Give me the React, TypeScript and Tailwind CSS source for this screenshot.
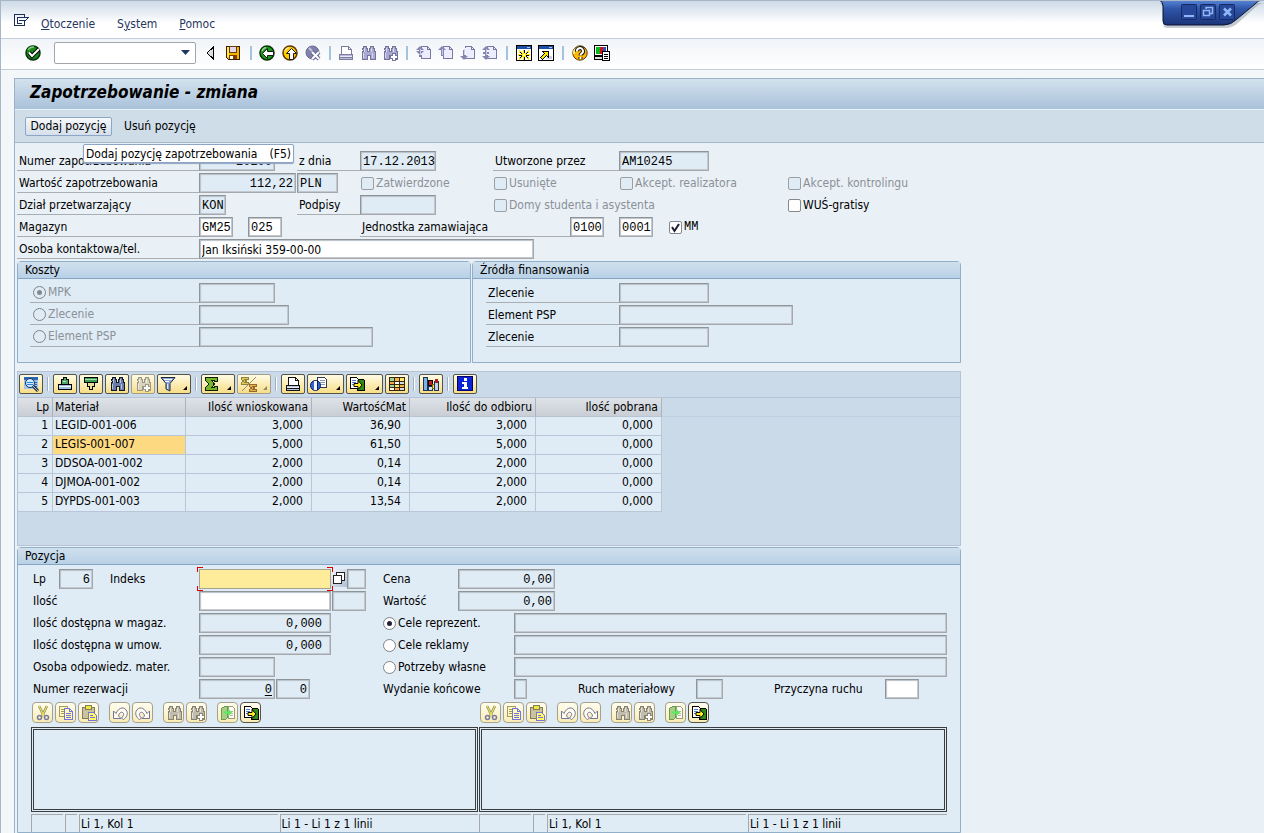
import type { ReactNode } from "react";
import clsx from "clsx";

const SANS = "font-['DejaVu_Sans_Condensed','DejaVu_Sans',sans-serif]";
const MONO = "font-['Liberation_Mono',monospace]";

/* ---------- icons ---------- */

function Svg({ children, w = 16, h = 16, crisp = true }: { children: ReactNode; w?: number; h?: number; crisp?: boolean }) {
  return (
    <svg width={w} height={h} viewBox={`0 0 ${w} ${h}`} fill="none" shapeRendering={crisp ? "crispEdges" : "auto"} className="shrink-0" aria-hidden="true">
      {children}
    </svg>
  );
}

const MenuIcon = () => (
  <Svg w={15} h={13}>
    <path d="M10.500 2.500V.5H.5v11h10V8.500" stroke="#1c2f5c" />
    <path d="M8 9.500H3.500v-6H14L10 8.500M5 6.500h6" stroke="#1c2f5c" />
  </Svg>
);

const OkIcon = () => (
  <Svg crisp={false}>
    <circle cx="8" cy="8" r="7" fill="#1d8a1d" stroke="#04300a" strokeWidth="1.500" />
    <path d="M3 5a6 6 0 0 1 6-3" stroke="#7ed67e" strokeWidth="1.500" />
    <path d="M4 7.500 7 11l7-7" stroke="#000" strokeWidth="4" />
    <path d="M4 7.500 7 11l7-7" stroke="#fff" strokeWidth="2" />
  </Svg>
);

const PrevIcon = () => (
  <Svg w={10}>
    <path d="M8.500 2v12L2 8z" fill="#dcdcdc" stroke="#000" />
  </Svg>
);

const SaveIcon = () => (
  <Svg>
    <path d="M1.500 1.500h13v13h-11l-2-2z" fill="#f5b800" stroke="#3a1d00" />
    <path d="M2 2h2v10H2z" fill="#ffe94a" />
    <path d="M4.500 1.500h7v6h-7z" fill="#e4d8ee" stroke="#6a3a10" />
    <path d="M4 10h8v4H4z" fill="#7a3a00" />
    <path d="M5 11h3v3H5z" fill="#fff" />
  </Svg>
);

function RoundIcon({ fill, edge, d, rotate = 0 }: { fill: string; edge: string; d: string; rotate?: number }) {
  return (
    <Svg crisp={false}>
      <circle cx="8" cy="8" r="7" fill={fill} stroke={edge} strokeWidth="1.500" />
      <path d="M3 6a5 5 0 0 1 4-3.500" stroke="#fff" strokeOpacity=".55" strokeWidth="1.500" />
      <g transform={`rotate(${rotate} 9 9)`}>
        <path d={d} fill="#fff" stroke="#1a1a1a" />
      </g>
    </Svg>
  );
}

const ARROW = "M3.500 8.500l5-5v3h6v4h-6v3z";
const BackIcon = () => <RoundIcon fill="#1d9a1d" edge="#062f06" d={ARROW} />;
const ExitIcon = () => <RoundIcon fill="#ffcc00" edge="#5e3500" d={ARROW} rotate={90} />;

const CancelIcon = () => (
  <Svg crisp={false}>
    <circle cx="7.500" cy="7.500" r="6.500" fill="#8080a8" stroke="#6a6a92" />
    <path d="M4 3l3 3" stroke="#c3c3dd" strokeWidth="2" />
    <path d="M7 7l7 7M14 7l-7 7" stroke="#6a6a96" strokeWidth="4" />
    <path d="M7 7l7 7M14 7l-7 7" stroke="#fff" strokeWidth="2" />
  </Svg>
);

function PrintIcon({ line = "#7c7c9c", fill = "#b9b9e0", paper = "#fff" }) {
  return (
    <Svg>
      <path d="M3.500 9.500v-8h7l3 3v5z" fill={paper} stroke={line} />
      <path d="M10.500 1.500v3h3" stroke={line} />
      <path d="M1.500 9.500h13v5h-13z" fill={fill} stroke={line} />
      <path d="M2 12.500h12" stroke={line} />
      <path d="M2 11h12" stroke="#fff" strokeOpacity=".7" />
    </Svg>
  );
}

function FindIcon({ fill = "#a9a9d3", line = "#73739b", plus = false }) {
  return (
    <Svg>
      <path d="M2.500 3.500h1v-2h3v2h1v3h2v-3h1v-2h3v2h1v3h1v8h-5v-4h-3v4h-5v-8h1z" fill={fill} stroke={line} />
      <path d="M4.500 3v4M11.500 3v4M3.500 8v5M12.500 8v5" stroke="#fff" strokeOpacity=".55" />
      {plus && <path d="M10.500 8.500h3v2h2v3h-2v2h-3v-2h-2v-3h2z" fill="#fff" stroke={line} />}
    </Svg>
  );
}

const PAGE_ARROWS = {
  first: "M4 0L0 4h3v1H0l4 4 4-4H5V4h3zM3 9h2v2H3z",
  prev: "M4 0L0 4h3v6h3V4h2z",
  next: "M4 14L0 10h3V4h2v6h3z",
  last: "M4 0L0 4h3v2H1v2h2v2H0l4 4 4-4H5V8h2V6H5V4h3z",
};

function PageIcon({ kind }: { kind: "first" | "prev" | "next" | "last" }) {
  return (
    <Svg>
      <path d="M5.500 2.500v-1h6l3 3v8.500h-9v-3" fill="#eeecff" stroke="#7a7aa0" />
      <path d="M11.500 1.500v3h3" stroke="#7a7aa0" />
      <path d={PAGE_ARROWS[kind]} fill="#8686b0" transform="translate(0 1)" shapeRendering="auto" />
      <path d="M4 4v6" stroke="#c9c9ea" />
    </Svg>
  );
}

const SessionIcon = () => (
  <Svg>
    <path d="M.5.5h15v15H.5z" fill="#fff" stroke="#000" />
    <path d="M1 1h14v3H1z" fill="#1b4fa6" />
    <path d="M11 2h3v1h-3z" fill="#9ec6ff" />
    <path d="M3 6l10 8M13 6L3 14M8 5v10M2 10h12" stroke="#ffe600" strokeWidth="2" />
    <path d="M4 7l2 2M12 7l-2 2M4 13l2-2M12 13l-2-2M8 5v3M8 12v3M3 10h3M10 10h3" stroke="#000" />
    <path d="M7 9h2v2H7z" fill="#fff" />
  </Svg>
);

const ShortcutIcon = () => (
  <Svg>
    <path d="M.5.5h15v15H.5z" fill="#fff" stroke="#000" />
    <path d="M1 1h14v3H1z" fill="#1b4fa6" />
    <path d="M11 2h3v1h-3z" fill="#9ec6ff" />
    <path d="M10 11h4v3h-6z" fill="#d0d0e4" />
    <path d="M4.500 6.500h6v6l-2-2-4 4-2-2 4-4z" fill="#ffe600" stroke="#000" />
  </Svg>
);

const HelpIcon = () => (
  <Svg crisp={false}>
    <circle cx="8" cy="8" r="7.200" fill="#ffb800" stroke="#5e3500" />
    <path d="M2 9a6 6 0 0 1 6-7" stroke="#fff27a" strokeWidth="2" />
    <path d="M5 6.500a3 3 0 1 1 4.500 2.200Q8.500 9.200 8.500 10.500M8.500 12v2" stroke="#111" strokeWidth="4" />
    <path d="M5 6.500a3 3 0 1 1 4.500 2.200Q8.500 9.200 8.500 10.500M8.500 12v2" stroke="#fff" strokeWidth="2" />
  </Svg>
);

const LayoutIcon = () => (
  <Svg>
    <path d="M.5.5h13v10H.5z" fill="#fff" stroke="#000" />
    <path d="M2 2h4v7H2z" fill="#00b91c" />
    <path d="M6 2h3v7H6z" fill="#e01010" />
    <path d="M9 2h3v7H9z" fill="#2b50c8" />
    <path d="M.5 11.500h8v3h-8z" fill="#ddd" stroke="#000" />
    <path d="M8.500 6.500h7v9h-7z" fill="#fff" stroke="#000" />
    <path d="M10 9.500h4M10 11.500h4M10 13.500h4" stroke="#000" />
  </Svg>
);

const DetailIcon = () => (
  <Svg w={18}>
    <path d="M2 1h14v12H2z" fill="#9ec4ef" />
    <path d="M2 1h14v3H2zM13 6h2v1h-2zM13 8h2v1h-2zM13 10h2v1h-2z" fill="#2a66b8" />
    <circle cx="8" cy="7" r="4.500" fill="#c5ecff" stroke="#1f2c46" shapeRendering="auto" />
    <path d="M5 6h6M5 8h6" stroke="#2f7fe0" />
    <path d="M11 10l5 5" stroke="#1f2c46" strokeWidth="3" shapeRendering="auto" />
    <path d="M11 10l5 5" stroke="#b7c8de" shapeRendering="auto" />
  </Svg>
);

const SortUpIcon = () => (
  <Svg>
    <path d="M6.500 1.500h3v2h2v5h-7v-5h2z" fill="#4fa566" stroke="#000" />
    <path d="M6 5.500h3" stroke="#b7e3c0" />
    <path d="M1.500 8.500h13v5h-13z" fill="#9dbfe4" stroke="#000" />
    <path d="M2 10h12" stroke="#fff" />
  </Svg>
);

const SortDownIcon = () => (
  <Svg>
    <path d="M1.500 1.500h13v5h-13z" fill="#3a9a50" stroke="#000" />
    <path d="M2 3h12" stroke="#a6dfb2" />
    <path d="M4.500 6.500h7v4h-2v3h-3v-3h-2z" fill="#e9df9a" stroke="#000" />
  </Svg>
);

const FilterIcon = () => (
  <Svg>
    <path d="M1 1.500h14l-5 6V15l-4-2V7.500z" fill="#8fa9d0" stroke="#1d2740" shapeRendering="auto" />
    <path d="M4 3.500h8M5 5.500h4" stroke="#fff" />
    <path d="M7.500 8v5" stroke="#dfe8f5" />
  </Svg>
);

const SumIcon = () => (
  <Svg>
    <path d="M1.500 1.500h12v4h-3v-1h-3l3 3.500-3 3.500h3v-1h3v4h-12v-3l3.500-3.500L1.500 4.500z" fill="#79b52a" stroke="#0a1f00" />
  </Svg>
);

const SubtotalIcon = () => (
  <Svg w={18}>
    <path d="M1.500 1.500h7v2h-4l2 1.500-2 1.500h4v2h-7v-2L3.500 5 1.500 3.500z" fill="#e3c94f" stroke="#8e8240" />
    <path d="M9.500 8.500h7v2h-4l2 1.500-2 1.500h4v2h-7v-2l2-1.500-2-1.500z" fill="#efab4a" stroke="#8e6c30" />
    <path d="M2 15L16 1" stroke="#9a8f66" shapeRendering="auto" />
  </Svg>
);

const ViewIcon = () => (
  <Svg w={18}>
    <path d="M7.500 1.500h7l2 2v8h-9z" fill="#fff" stroke="#2d3a58" />
    <path d="M10 4.500h5M10 6.500h5M10 8.500h5" stroke="#8a97b5" />
    <circle cx="5.500" cy="9.500" r="5" fill="#2f63d6" stroke="#101c5a" shapeRendering="auto" />
    <path d="M4 5h3v9H4z" fill="#f2f6ff" />
    <path d="M7.500 5v9" stroke="#101c5a" />
  </Svg>
);

function ExportIcon({ faded = false }) {
  return faded ? (
    <Svg>
      <path d="M8.500 1.500h4l2 2v10h-6z" fill="#fdfdf2" stroke="#9a9a80" />
      <path d="M10 6.500h3M10 8.500h3M10 10.500h3" stroke="#b5b5a0" />
      <path d="M1.500 3.500l3-2h3v11l-2 2h-4z" fill="#a5cf86" stroke="#6d9a50" />
      <path d="M4 6.500h4v-3l4 4-4 4v-3H4z" fill="#5eea5e" shapeRendering="auto" />
    </Svg>
  ) : (
    <Svg>
      <path d="M8.500 3.500h6l1 1v10h-7z" fill="#2e8b16" stroke="#000" />
      <path d="M1.500 1.500h6l2 2v9h-8z" fill="#fff" stroke="#000" />
      <path d="M3 4.500h4M3 6.500h4M3 8.500h2" stroke="#5b79c0" />
      <path d="M5 7.500h4v-3l4 4.500-4 4.500v-3H5z" fill="#ffee20" stroke="#000" shapeRendering="auto" />
    </Svg>
  );
}

const GridIcon = () => (
  <Svg>
    <path d="M0 1h16v14H0z" fill="#33260a" />
    <path d="M1 2h4v3H1zM1 9h4v2H1z" fill="#9fd49f" />
    <path d="M6 2h4v3H6zM11 9h4v2h-4z" fill="#f7b33f" />
    <path d="M11 2h4v3h-4zM6 9h4v2H6z" fill="#ffe86b" />
    <path d="M1 6h4v2H1zM6 12h4v2H6z" fill="#f8a24a" />
    <path d="M6 6h4v2H6zM1 12h4v2H1z" fill="#fff" />
    <path d="M11 6h4v2h-4zM11 12h4v2h-4z" fill="#cfd9ee" />
  </Svg>
);

const ChartIcon = () => (
  <Svg>
    <path d="M.5 1.500h4v13h-4z" fill="#7fb0e4" stroke="#1d3354" />
    <path d="M5.500 4.500h4v5h-4z" fill="#c22020" stroke="#000" />
    <path d="M5.500 10.500h4v4h-4z" fill="#d8e2f2" stroke="#1d3354" />
    <path d="M9.500 8.500h3v4h-3z" fill="#ffe55a" stroke="#8a6d00" />
    <path d="M11.500 5.500h4v9h-4z" fill="#bcd2ee" stroke="#1d3354" />
    <path d="M12 3h3v4h-3z" fill="#b01c1c" />
  </Svg>
);

const InfoIcon = () => (
  <Svg>
    <path d="M.5.5h15v14H.5z" fill="#0a22d8" stroke="#000066" />
    <path d="M7 2h3v3H7zM5 6h5v5h1v2H5v-2h2V8H5z" fill="#fff" />
  </Svg>
);

const CutIcon = () => (
  <Svg crisp={false}>
    <path d="M4 1l5 10M12 1L7 11" stroke="#8d8a5e" strokeWidth="2.500" />
    <path d="M4 1l5 10M12 1L7 11" stroke="#fff25a" />
    <circle cx="4.500" cy="12.500" r="2" stroke="#7a7a9e" strokeWidth="1.500" />
    <circle cx="11.500" cy="12.500" r="2" stroke="#7a7a9e" strokeWidth="1.500" />
  </Svg>
);

const CopyIcon = () => (
  <Svg>
    <path d="M1.500 1.500h8v10h-8z" fill="#fffbc0" stroke="#a39c62" />
    <path d="M3 4.500h5M3 6.500h5M3 8.500h5" stroke="#a39c62" />
    <path d="M6.500 3.500h5l3 3v8h-8z" fill="#fffcb0" stroke="#7474e0" />
    <path d="M11.500 3.500v3h3M8 8.500h5M8 10.500h5M8 12.500h5" stroke="#7474e0" />
  </Svg>
);

const PasteIcon = () => (
  <Svg>
    <path d="M1.500 2.500h12v11h-12z" fill="#c9c3a0" stroke="#857d58" />
    <path d="M4.500.5h6v4h-6z" fill="#ece83c" stroke="#857d58" />
    <path d="M7.500 7.500h5l3 3v5h-8z" fill="#fffb60" stroke="#7474e0" />
    <path d="M9 10.500h3M9 12.500h5" stroke="#7474e0" />
  </Svg>
);

function UndoIcon({ redo = false }) {
  return (
    <Svg crisp={false}>
      <g transform={redo ? "translate(16 0) scale(-1 1)" : undefined}>
        <path d="M1.500 6v7.500H9l-2.500-2.500C7 7.500 10 6 11.500 8.500c.5 1.500-.5 3-2 4.500l2 1.500c3-2 4.500-5 3.500-8C13 1.500 7 1.500 4 8.500z" fill="#fffdf0" stroke="#74749a" />
      </g>
    </Svg>
  );
}

const MatchIcon = () => (
  <Svg w={14} h={14}>
    <path d="M4.500 1.500h8v8h-8z" fill="#fff" stroke="#222" />
    <path d="M1.500 4.500h8v8h-8z" fill="#fff" stroke="#222" />
  </Svg>
);

/* ---------- form parts ---------- */

interface FieldProps {
  id: string;
  className: string;
  value?: string;
  label?: string;
  editable?: boolean;
  right?: boolean;
  inset?: boolean;
  sans?: boolean;
}

function Field({ id, className, value = "", label, editable, right, inset, sans }: FieldProps) {
  return (
    <input
      id={id}
      type="text"
      aria-label={label}
      defaultValue={value}
      readOnly={!editable}
      className={clsx(
        "h-5 shrink-0 border border-t-[#8f9499] border-l-[#8f9499] border-r-[#a5a9ad] border-b-[#a5a9ad] pt-0.5 text-[12px] leading-4 text-black shadow-[inset_1px_1px_1px_#b9c1c8,inset_-1px_-1px_0_#c3c9ce] outline-none",
        sans ? SANS : MONO,
        editable ? "bg-white" : "bg-[#dfebf5]",
        right && "text-right",
        inset ? "pr-2" : right ? "pr-0.5" : "pl-0.5",
        className
      )}
    />
  );
}

function Label({ htmlFor, children, line, className }: { htmlFor: string; children: ReactNode; line?: boolean; className?: string }) {
  return (
    <label htmlFor={htmlFor} className={clsx("h-5 shrink-0 leading-[21px] whitespace-nowrap", line && "border-b border-[#a9aeb3] pl-0.5", className)}>
      {children}
    </label>
  );
}

function Check({ id, label, disabled, checked, mono, className }: { id: string; label: string; disabled?: boolean; checked?: boolean; mono?: boolean; className?: string }) {
  return (
    <label htmlFor={id} className={clsx("flex h-5 items-center gap-0.5 pl-px leading-[21px] whitespace-nowrap", disabled ? "text-[#8b9197]" : "text-black", mono && MONO, className)}>
      <span className="relative">
        <input
          id={id}
          type="checkbox"
          disabled={disabled}
          defaultChecked={checked}
          className="peer block size-[13px] appearance-none rounded-xs border border-[#85898d] bg-white disabled:border-[#9a9fa4] disabled:bg-[#dfebf5]"
        />
        <svg width="13" height="13" viewBox="0 0 13 13" fill="none" className="pointer-events-none absolute inset-0 hidden peer-checked:block" aria-hidden="true">
          <path d="M3 6l2.500 4L10 3" stroke="#1c1c30" strokeWidth="2" />
        </svg>
      </span>
      {label}
    </label>
  );
}

function Radio({ id, name, label, disabled, checked, className }: { id: string; name: string; label: string; disabled?: boolean; checked?: boolean; className?: string }) {
  return (
    <label htmlFor={id} className={clsx("flex h-5 shrink-0 items-center gap-0.5 leading-[21px] whitespace-nowrap", disabled && "text-[#8b9197]", className)}>
      <span className="relative">
        <input
          id={id}
          type="radio"
          name={name}
          disabled={disabled}
          defaultChecked={checked}
          className="peer block size-[13px] appearance-none rounded-full border border-[#808488] bg-white disabled:bg-transparent"
        />
        <span className={clsx("pointer-events-none absolute inset-[4px] hidden rounded-full peer-checked:block", disabled ? "bg-[#85898d]" : "bg-[#22223a]")} />
      </span>
      {label}
    </label>
  );
}

function Panel({ title, children, className }: { title: string; children: ReactNode; className?: string }) {
  return (
    <section className={clsx("flex flex-col rounded-t-sm border border-[#92afca] bg-[#dfebf5]", className)}>
      <h2 className="h-[17px] border-b border-[#86a5c6] bg-linear-to-b from-[#cfe0ee] to-[#b9d1e6] pl-[7px] leading-4">{title}</h2>
      {children}
    </section>
  );
}

/* ---------- toolbars ---------- */

const Sep = () => <span className="h-3.5 w-0.5 shrink-0 bg-[#a4c3de]" />;

function IconButton({ label, children, className }: { label: string; children: ReactNode; className?: string }) {
  return (
    <button type="button" aria-label={label} className={clsx("flex h-4 shrink-0 items-center", className)}>
      {children}
    </button>
  );
}

function YellowButton({ label, children, menu, wide, faded }: { label: string; children: ReactNode; menu?: boolean; wide?: boolean; faded?: boolean }) {
  return (
    <button
      type="button"
      aria-label={label}
      className={clsx(
        "flex h-5 shrink-0 items-center rounded-xs border bg-linear-to-b from-[#fffbe4] to-[#f8dd84]",
        menu || wide ? "justify-between pl-0.5" : "w-6 justify-center",
        menu && "w-[34px]",
        wide && "w-[37px]",
        faded ? "border-[#a39f8c] text-[#8e8a70]" : "border-[#55534a] text-black"
      )}
    >
      {children}
      {(menu || wide) && (
        <svg width="7" height="16" viewBox="0 0 7 16" className="mr-0.5 shrink-0" aria-hidden="true">
          <path d="M6 10v4H2z" fill="currentColor" />
        </svg>
      )}
    </button>
  );
}

function EditButton({ label, children, active }: { label: string; children: ReactNode; active?: boolean }) {
  return (
    <button
      type="button"
      aria-label={label}
      className={clsx(
        "flex size-[21px] items-center justify-center rounded-sm border bg-linear-to-b from-[#fffdf0] to-[#f9ecb4]",
        active ? "border-[#55534a]" : "border-[#a7a18a]"
      )}
    >
      {children}
    </button>
  );
}

function StandardToolbar() {
  return (
    <div className="flex h-[31px] items-center border-b border-[#c3cdd9] bg-linear-to-b from-[#f1f4f8] to-white pb-0.5 pl-6">
      <IconButton label="Enter"><OkIcon /></IconButton>
      <div className="relative ml-[13px]">
        <input type="text" aria-label="Kod transakcji" className="block h-[22px] w-[142px] rounded-xs border border-[#a2a6aa] bg-white px-1 outline-none" />
        <button type="button" aria-label="Historia" className="absolute top-2 right-1.5">
          <svg width="9" height="6" viewBox="0 0 9 6" aria-hidden="true">
            <path d="M0 0h9L4.500 5z" fill="#20355f" />
          </svg>
        </button>
      </div>
      <IconButton label="Poprzedni" className="ml-[9px]"><PrevIcon /></IconButton>
      <IconButton label="Zapisz" className="mr-[9px] ml-2.5"><SaveIcon /></IconButton>
      <Sep />
      <div className="mr-2 ml-[7px] flex gap-[7px]">
        <IconButton label="Wstecz"><BackIcon /></IconButton>
        <IconButton label="Zakończ"><ExitIcon /></IconButton>
        <IconButton label="Anuluj"><CancelIcon /></IconButton>
      </div>
      <Sep />
      <div className="mr-2 ml-[7px] flex gap-1.5">
        <IconButton label="Drukuj"><PrintIcon /></IconButton>
        <IconButton label="Szukaj"><FindIcon /></IconButton>
        <IconButton label="Szukaj dalej"><FindIcon plus /></IconButton>
      </div>
      <Sep />
      <div className="mx-2 flex gap-1.5">
        <IconButton label="Pierwsza strona"><PageIcon kind="first" /></IconButton>
        <IconButton label="Poprzednia strona"><PageIcon kind="prev" /></IconButton>
        <IconButton label="Następna strona"><PageIcon kind="next" /></IconButton>
        <IconButton label="Ostatnia strona"><PageIcon kind="last" /></IconButton>
      </div>
      <Sep />
      <div className="mx-2 flex gap-1.5">
        <IconButton label="Nowy tryb"><SessionIcon /></IconButton>
        <IconButton label="Skrót"><ShortcutIcon /></IconButton>
      </div>
      <Sep />
      <div className="mx-2 flex gap-1.5">
        <IconButton label="Pomoc"><HelpIcon /></IconButton>
        <IconButton label="Układ"><LayoutIcon /></IconButton>
      </div>
    </div>
  );
}

function WindowControls() {
  return (
    <div className="absolute top-0 right-0">
      <svg width="106" height="30" viewBox="0 0 106 30" aria-hidden="true">
        <defs>
          <linearGradient id="tab" x1="0" y1="0" x2="0" y2="1">
            <stop offset="0" stopColor="#5a86d8" />
            <stop offset=".35" stopColor="#2f56a8" />
            <stop offset="1" stopColor="#1b3478" />
          </linearGradient>
        </defs>
        <path d="M1 2q4 1 4 6v15q0 4 5 4h57q8 0 14-6L99 5q3-3 7-3z" fill="#8b95a8" opacity=".5" />
        <path d="M1-1q4 1 4 6v15q0 4 4 4h57q7 0 13-6L97 3q3-4 8-4z" fill="url(#tab)" stroke="#0a1430" />
        <g fill="#27489a" stroke="#142a66">
          <rect x="23.500" y="3.500" width="15" height="15" rx="1" />
          <rect x="42.500" y="3.500" width="15" height="15" rx="1" />
          <rect x="61.500" y="3.500" width="15" height="15" rx="1" />
        </g>
        <g stroke="#8fb6f7" fill="none">
          <path d="M26 15h10" strokeWidth="2" />
          <path d="M48 8V6.500h6.500v6H52M45.500 9.500h6v5h-6z" strokeWidth="1.500" />
          <path d="M66 7.500l7 7M73 7.500l-7 7" strokeWidth="2.500" />
        </g>
      </svg>
    </div>
  );
}

/* ---------- sections ---------- */

function HeaderForm() {
  const row = "grid h-5 grid-cols-[182px_98px_63px_133px_126px_168px_1fr]";
  return (
    <form className="flex flex-col gap-0.5">
      <div className={row}>
        <Label htmlFor="numer" line>Numer zapotrzebowania</Label>
        <Field id="numer" className="w-[76px]" value="20200" right />
        <Label htmlFor="zdnia" line>z dnia</Label>
        <Field id="zdnia" className="w-[76px]" value="17.12.2013" />
        <Label htmlFor="utworzone" line>Utworzone przez</Label>
        <Field id="utworzone" className="w-[90px]" value="AM10245" />
      </div>
      <div className={row}>
        <Label htmlFor="wartosc" line>Wartość zapotrzebowania</Label>
        <Field id="wartosc" className="w-[97px]" value="112,22" right />
        <Field id="waluta" label="Waluta" className="w-[41px]" value="PLN" />
        <Check id="zatw" label="Zatwierdzone" disabled />
        <Check id="usun" label="Usunięte" disabled />
        <Check id="realiz" label="Akcept. realizatora" disabled />
        <Check id="kontr" label="Akcept. kontrolingu" disabled />
      </div>
      <div className={row}>
        <Label htmlFor="dzial" line>Dział przetwarzający</Label>
        <Field id="dzial" className="w-[27px]" value="KON" />
        <Label htmlFor="podpisy" line>Podpisy</Label>
        <Field id="podpisy" className="w-[76px]" />
        <Check id="domy" label="Domy studenta i asystenta" disabled className="col-span-2" />
        <Check id="wus" label="WUŚ-gratisy" />
      </div>
      <div className={row}>
        <Label htmlFor="magazyn" line>Magazyn</Label>
        <div className="col-span-2 flex gap-[15px]">
          <Field id="magazyn" className="w-[34px]" value="GM25" editable />
          <Field id="magazyn2" label="Magazyn" className="w-[34px]" value="025" editable />
        </div>
        <div className="col-span-2 flex">
          <Label htmlFor="jedn" line className="w-[210px]">Jednostka zamawiająca</Label>
          <Field id="jedn" className="w-[34px]" value="0100" editable />
        </div>
        <div className="flex gap-[15px]">
          <Field id="jedn2" label="Jednostka" className="w-[34px]" value="0001" editable />
          <Check id="mm" label="MM" checked mono />
        </div>
      </div>
      <div className={row}>
        <Label htmlFor="osoba" line>Osoba kontaktowa/tel.</Label>
        <Field id="osoba" className="col-span-4 w-[335px]" value="Jan Iksiński 359-00-00" editable sans />
      </div>
    </form>
  );
}

const KOSZTY = [
  { id: "mpk", label: "MPK", width: "w-[76px]", checked: true },
  { id: "zlec", label: "Zlecenie", width: "w-[90px]", checked: false },
  { id: "psp", label: "Element PSP", width: "w-[174px]", checked: false },
];

const ZRODLA = [
  { id: "f-zlec", label: "Zlecenie", width: "w-[90px]" },
  { id: "f-psp", label: "Element PSP", width: "w-[174px]" },
  { id: "f-zlec2", label: "Zlecenie", width: "w-[90px]" },
];

function CostPanels() {
  return (
    <div className="flex gap-px">
      <Panel title="Koszty" className="w-[454px]">
        <div className="flex flex-col gap-0.5 pt-1 pb-[15px] pl-3">
          {KOSZTY.map((k) => (
            <div key={k.id} className="flex">
              <Radio id={k.id} name="koszty" label={k.label} disabled checked={k.checked} className="w-[169px] border-b border-[#a9aeb3] pl-[3px]" />
              <Field id={k.id + "-v"} label={k.label} className={k.width} />
            </div>
          ))}
        </div>
      </Panel>
      <Panel title="Źródła finansowania" className="flex-1">
        <div className="flex flex-col gap-0.5 pt-1 pb-[15px] pl-[13px]">
          {ZRODLA.map((z) => (
            <div key={z.id} className="flex">
              <Label htmlFor={z.id} line className="w-[133px]">{z.label}</Label>
              <Field id={z.id} className={z.width} />
            </div>
          ))}
        </div>
      </Panel>
    </div>
  );
}

const ROWS = [
  ["LEGID-001-006", "3,000", "36,90", "3,000", "0,000"],
  ["LEGIS-001-007", "5,000", "61,50", "5,000", "0,000"],
  ["DDSOA-001-002", "2,000", "0,14", "2,000", "0,000"],
  ["DJMOA-001-002", "2,000", "0,14", "2,000", "0,000"],
  ["DYPDS-001-003", "2,000", "13,54", "2,000", "0,000"],
];

const COLS = [
  { name: "Lp", width: "w-[35px]" },
  { name: "Materiał", width: "w-[133px]" },
  { name: "Ilość wnioskowana", width: "w-[126px]" },
  { name: "WartośćMat", width: "w-[98px]" },
  { name: "Ilość do odbioru", width: "w-[126px]" },
  { name: "Ilość pobrana", width: "w-[126px]" },
];

const AlvSep = () => <span className="mx-0.5 h-3.5 w-0.5 shrink-0 border-r border-white bg-[#9fb0c2]" />;

function ItemsTable() {
  return (
    <section className="border border-[#b4c4d6] bg-[#cbdae8] pb-[33px]">
      <div className="flex h-[26px] items-center gap-0.5 border-b border-[#b4c4d6] pb-0.5 pl-px">
        <YellowButton label="Szczegóły"><DetailIcon /></YellowButton>
        <AlvSep />
        <YellowButton label="Sortuj rosnąco"><SortUpIcon /></YellowButton>
        <YellowButton label="Sortuj malejąco"><SortDownIcon /></YellowButton>
        <YellowButton label="Szukaj"><FindIcon fill="#6a7ca8" line="#10182c" /></YellowButton>
        <YellowButton label="Szukaj dalej" faded><FindIcon fill="#d8d4c0" line="#9c9884" plus /></YellowButton>
        <YellowButton label="Filtr" menu><FilterIcon /></YellowButton>
        <AlvSep />
        <YellowButton label="Suma" menu><SumIcon /></YellowButton>
        <YellowButton label="Suma częściowa" menu faded><SubtotalIcon /></YellowButton>
        <AlvSep />
        <YellowButton label="Drukuj"><PrintIcon line="#111" fill="#b8c6e0" /></YellowButton>
        <YellowButton label="Widoki" wide><ViewIcon /></YellowButton>
        <YellowButton label="Eksport" wide><ExportIcon /></YellowButton>
        <YellowButton label="Układ"><GridIcon /></YellowButton>
        <AlvSep />
        <YellowButton label="Grafika"><ChartIcon /></YellowButton>
        <AlvSep />
        <YellowButton label="Informacja"><InfoIcon /></YellowButton>
      </div>
      <div className="bg-linear-to-b from-[#cbdae8] from-[18px] via-[#b4c4d6] via-[18px] to-[#cbdae8] to-[19px]">
        <table className="w-[644px] table-fixed border-separate border-spacing-0">
          <thead>
            <tr className="h-[19px]">
              {COLS.map((c, i) => (
                <th
                  key={c.name}
                  className={clsx(
                    c.width,
                    "border-r border-b border-r-[#a9b4c0] border-b-[#b8c4d2] bg-linear-to-b from-[#dfe3e8] to-[#c9ced6] p-0 leading-[18px] font-normal",
                    i === 1 ? "pl-0.5 text-left" : "pr-[3px] text-right"
                  )}
                >
                  {c.name}
                </th>
              ))}
            </tr>
          </thead>
          <tbody>
            {ROWS.map((r, i) => (
              <tr key={r[0]} className="h-[19px]">
                <td className="border-r border-b border-[#b8c6d8] bg-[#dfebf5] p-0 pr-1 pb-0.5 text-right leading-4">{i + 1}</td>
                {r.map((v, j) => (
                  <td
                    key={j}
                    className={clsx(
                      "border-r border-b border-[#b8c6d8] p-0 pb-0.5 leading-4",
                      j === 0 ? "pl-0.5 text-left" : "pr-2 text-right",
                      i === 1 && j === 0 ? "bg-[#fdd981]" : "bg-[#dfebf5]"
                    )}
                  >
                    {v}
                  </td>
                ))}
              </tr>
            ))}
          </tbody>
        </table>
      </div>
    </section>
  );
}

function EditToolbar() {
  return (
    <div className="flex gap-[10px] pl-px">
      <div className="flex gap-0.5">
        <EditButton label="Wytnij"><CutIcon /></EditButton>
        <EditButton label="Kopiuj"><CopyIcon /></EditButton>
        <EditButton label="Wklej"><PasteIcon /></EditButton>
      </div>
      <div className="flex gap-0.5">
        <EditButton label="Cofnij"><UndoIcon /></EditButton>
        <EditButton label="Ponów"><UndoIcon redo /></EditButton>
      </div>
      <div className="flex gap-0.5">
        <EditButton label="Szukaj"><FindIcon fill="#c0bcae" line="#88826e" /></EditButton>
        <EditButton label="Szukaj dalej"><FindIcon fill="#c0bcae" line="#88826e" plus /></EditButton>
      </div>
      <div className="flex gap-0.5">
        <EditButton label="Wczytaj"><ExportIcon faded /></EditButton>
        <EditButton label="Zapisz jako" active><ExportIcon /></EditButton>
      </div>
    </div>
  );
}

function Editor({ className, lead, name }: { className: string; lead: string; name: string }) {
  const cell = "h-[18px] border-t border-l border-[#a5a9ac] leading-[18px] whitespace-nowrap";
  return (
    <div className={clsx("flex flex-col", className)}>
      <EditToolbar />
      <textarea aria-label={name} className="mt-1 block h-[85px] w-full resize-none border-3 border-double border-[#3a3c3e] bg-[#dfebf5] outline-none" />
      <div className="mt-0.5 flex gap-0.5">
        <div className={clsx(cell, lead)} />
        <div className={clsx(cell, "w-3")} />
        <div className={clsx(cell, "flex-1 pl-px")}>Li 1, Kol 1</div>
        <div className={clsx(cell, "flex-1 pl-px")}>Li 1 - Li 1 z 1 linii</div>
      </div>
    </div>
  );
}

function PositionPanel() {
  const row = "grid h-5 grid-cols-[166px_184px_131px_1fr]";
  return (
    <Panel title="Pozycja" className="flex-1">
      <div className="flex flex-col gap-0.5 pt-1 pr-[13px] pl-[15px]">
        <div className={row}>
          <div className="flex">
            <Label htmlFor="lp" className="w-[26px]">Lp</Label>
            <Field id="lp" className="w-[34px]" value="6" right />
            <Label htmlFor="indeks" className="ml-[17px]">Indeks</Label>
          </div>
          <div className="flex">
            <div className="relative">
              <input id="indeks" type="text" className={clsx("block h-5 w-[132px] border border-[#a5a48c] bg-[#ffec9a] px-0.5 outline-none", MONO)} />
              <svg width="136" height="24" viewBox="0 0 136 24" fill="none" stroke="#e00000" className="pointer-events-none absolute -top-0.5 -left-0.5" aria-hidden="true">
                <path d="M.5 5V.5H6M130 .5h5.500V5M.5 19v4.500H6M130 23.500h5.500V19" shapeRendering="crispEdges" />
              </svg>
            </div>
            <button type="button" aria-label="Pomoc wyszukiwania" className="flex h-[18px] w-4 items-center justify-center bg-linear-to-br from-[#f2f5fa] to-[#b0bfd4]">
              <MatchIcon />
            </button>
            <Field id="indeks-jm" label="Kod" className="w-[19px]" />
          </div>
          <div className="col-span-2 flex">
            <Label htmlFor="cena" className="w-[75px]">Cena</Label>
            <Field id="cena" className="w-[97px]" value="0,00" right />
          </div>
        </div>
        <div className={row}>
          <Label htmlFor="ilosc">Ilość</Label>
          <div className="flex gap-px">
            <Field id="ilosc" className="w-[132px]" editable />
            <Field id="ilosc-jm" label="Jednostka miary" className="w-[34px]" />
          </div>
          <div className="col-span-2 flex">
            <Label htmlFor="wart" className="w-[75px]">Wartość</Label>
            <Field id="wart" className="w-[97px]" value="0,00" right />
          </div>
        </div>
        <div className={row}>
          <Label htmlFor="magaz">Ilość dostępna w magaz.</Label>
          <Field id="magaz" className="w-[132px]" value="0,000" right inset />
          <Radio id="reprezent" name="cel" label="Cele reprezent." checked />
          <Field id="reprezent-v" label="Cele reprezent." className="w-full" />
        </div>
        <div className={row}>
          <Label htmlFor="umow">Ilość dostępna w umow.</Label>
          <Field id="umow" className="w-[132px]" value="0,000" right inset />
          <Radio id="reklamy" name="cel" label="Cele reklamy" />
          <Field id="reklamy-v" label="Cele reklamy" className="w-full" />
        </div>
        <div className={row}>
          <Label htmlFor="odp">Osoba odpowiedz. mater.</Label>
          <Field id="odp" className="w-[76px]" />
          <Radio id="wlasne" name="cel" label="Potrzeby własne" />
          <Field id="wlasne-v" label="Potrzeby własne" className="w-full" />
        </div>
        <div className={row}>
          <Label htmlFor="rez">Numer rezerwacji</Label>
          <div className="flex gap-px">
            <Field id="rez" className="w-[76px] underline underline-offset-2" value="0" right />
            <Field id="rez2" label="Pozycja rezerwacji" className="w-[34px]" value="0" right />
          </div>
          <Label htmlFor="wydanie">Wydanie końcowe</Label>
          <div className="flex">
            <Field id="wydanie" className="w-[13px]" />
            <Label htmlFor="ruch" className="ml-[51px] w-[118px]">Ruch materiałowy</Label>
            <Field id="ruch" className="w-[27px]" />
            <Label htmlFor="przyczyna" className="ml-[51px] w-[111px]">Przyczyna ruchu</Label>
            <Field id="przyczyna" className="w-[34px]" editable />
          </div>
        </div>
      </div>
      <div className="flex gap-px pt-[3px] pr-[13px] pl-[13px]">
        <Editor className="w-[447px]" lead="w-8" name="Tekst pozycji" />
        <Editor className="flex-1" lead="w-[52px]" name="Uwagi" />
      </div>
    </Panel>
  );
}

export default function App() {
  return (
    <div className={clsx("relative flex min-h-screen flex-col overflow-hidden border-t border-l border-[#a9b6c8] bg-[#f4f7fa] text-[12px] text-black", SANS)}>
      <nav className="flex h-[38px] items-center border-b border-[#c3cdd9] bg-linear-to-b from-[#cddae7] to-white to-60% pt-2 pl-[13px] text-[#27365f]">
        <div className="mr-3 pb-1.5">
          <MenuIcon />
        </div>
        <div className="flex gap-[22px]">
          <a href="#otoczenie"><u>O</u>toczenie</a>
          <a href="#system">S<u>y</u>stem</a>
          <a href="#pomoc"><u>P</u>omoc</a>
        </div>
      </nav>
      <WindowControls />
      <StandardToolbar />

      <main className="mt-2 ml-[13px] flex flex-1 flex-col border-t border-l border-[#9db2ca] bg-[#e9f0f6]">
        <h1 className="h-[31px] border-b border-[#eaf3fa] bg-linear-to-b from-[#d3e2ee] to-[#a9c1da] pl-[15px] text-[17px] leading-[26px] font-bold italic">
          Zapotrzebowanie - zmiana
        </h1>
        <div className="relative flex h-[33px] items-center border-b border-[#a3b8cc] bg-[#cfdde8] pl-2.5">
          <button type="button" className="h-[19px] w-[87px] rounded-xs border border-[#8ea6c6] bg-linear-to-b from-[#f6f8fb] to-[#d5dfeb] leading-4 whitespace-nowrap">
            Dodaj pozycję
          </button>
          <button type="button" className="ml-3 leading-4">Usuń pozycję</button>
          <div role="tooltip" className="absolute top-[34px] left-[68px] z-10 flex h-[19px] w-[211px] items-center justify-between rounded-xs border border-[#8fa3c2] bg-white px-0.5 leading-4 whitespace-nowrap shadow-[0_1px_1px_#8fa3c2]">
            <span>Dodaj pozycję zapotrzebowania</span>
            <span>(F5)</span>
          </div>
        </div>
        <div className="flex w-[946px] flex-1 flex-col pt-2 pl-0.5">
          <HeaderForm />
          <div className="mt-0.5">
            <CostPanels />
          </div>
          <div className="mt-2 mb-px">
            <ItemsTable />
          </div>
          <PositionPanel />
        </div>
      </main>
    </div>
  );
}
